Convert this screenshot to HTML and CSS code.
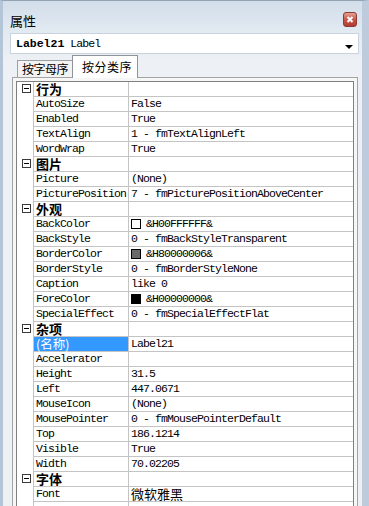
FILE: index.html
```html
<!DOCTYPE html>
<html>
<head>
    <meta charset="UTF-8">
    <title>属性</title>
    <link rel="stylesheet" href="styles.css">
</head>
<body>
    <div class="window">
        <div class="titlebar">
            <span class="title">属性</span>
            <span class="close">
                <svg width="12" height="13" viewBox="0 0 12 13"><path d="M3.5 4 L8.5 9 M8.5 4 L3.5 9" stroke="#fff" stroke-width="2"/></svg>
            </span>
        </div>

        <div class="combo">
            <span class="obj"><b>Label21</b> Label</span>
            <span class="arrow"></span>
        </div>

        <div class="tabs">
            <div class="tab">按字母序</div>
            <div class="tab active">按分类序</div>
        </div>

        <div class="grid-frame">
            <div class="grid" id="grid"></div>
        </div>
    </div>

    <script>
        // 属性数据：cat 为分类行
        const rows = [
            { cat: '行为' },
            ['AutoSize', 'False'],
            ['Enabled', 'True'],
            ['TextAlign', '1 - fmTextAlignLeft'],
            ['WordWrap', 'True'],
            { cat: '图片' },
            ['Picture', '(None)'],
            ['PicturePosition', '7 - fmPicturePositionAboveCenter'],
            { cat: '外观' },
            ['BackColor', '&H00FFFFFF&', '#ffffff'],
            ['BackStyle', '0 - fmBackStyleTransparent'],
            ['BorderColor', '&H80000006&', '#696969'],
            ['BorderStyle', '0 - fmBorderStyleNone'],
            ['Caption', 'like 0'],
            ['ForeColor', '&H00000000&', '#000000'],
            ['SpecialEffect', '0 - fmSpecialEffectFlat'],
            { cat: '杂项' },
            ['(名称)', 'Label21', null, 'sel'],
            ['Accelerator', ''],
            ['Height', '31.5'],
            ['Left', '447.0671'],
            ['MouseIcon', '(None)'],
            ['MousePointer', '0 - fmMousePointerDefault'],
            ['Top', '186.1214'],
            ['Visible', 'True'],
            ['Width', '70.02205'],
            { cat: '字体' },
            ['Font', '微软雅黑', null, 'cjk'],
            ['', '']
        ];

        const grid = document.getElementById('grid');
        const minus = '<svg width="9" height="9" viewBox="0 0 9 9"><rect x="0.5" y="0.5" width="8" height="8" fill="#fff" stroke="#3a3a3a"/><path d="M2 4.5h5" stroke="#000"/></svg>';

        rows.forEach(function(r) {
            const row = document.createElement('div');
            row.className = 'row';
            if (r.cat) {
                row.classList.add('cat');
                row.innerHTML = '<div class="g">' + minus + '</div><div class="n">' + r.cat + '</div><div class="v"></div>';
            } else {
                const swatch = r[2] ? '<span class="swatch" style="background:' + r[2] + '"></span>' : '';
                const nameCls = r[3] === 'sel' ? 'n sel' : 'n';
                const valCls = r[3] === 'cjk' ? 'v cjk' : 'v';
                row.innerHTML = '<div class="g"></div><div class="' + nameCls + '">' + r[0] + '</div><div class="' + valCls + '">' + swatch + r[1] + '</div>';
            }
            grid.appendChild(row);
        });
    </script>
</body>
</html>
```

FILE: styles.css
```css
* {
    box-sizing: border-box;
    margin: 0;
    padding: 0;
}
body {
    width: 369px;
    height: 506px;
    overflow: hidden;
    background: #bccbdc;
    font-family: "Noto Sans CJK SC", sans-serif;
    color: #000;
}
.window {
    height: 506px;
    overflow: hidden;
    border-top: 1px solid #93a3b6;
    border-left: 3px solid #b5c5d8;
    border-right: 7px solid #bdcbdc;
    background: linear-gradient(#d2deea, #e3eaf2 32px, #edf0f4 60px, #eef1f4);
}
.titlebar {
    height: 32px;
    display: flex;
    align-items: flex-start;
    justify-content: space-between;
    padding: 11px 5px 0 7px;
}
.title {
    font-size: 13px;
    line-height: 18px;
}
.close {
    width: 14px;
    height: 15px;
    display: flex;
    align-items: center;
    justify-content: center;
    border: 1px solid #8e3a33;
    border-radius: 3px;
    background: linear-gradient(#e6a196, #c9564a 50%, #b23b30);
}
.combo {
    height: 21px;
    margin: 0 3px 0 7px;
    border: 1px solid #c9d3de;
    background: #fff;
    display: flex;
    align-items: center;
    justify-content: space-between;
    padding: 0 5px;
    font-family: "Liberation Mono", "Noto Sans CJK SC", monospace;
    font-size: 11.5px;
    letter-spacing: -0.9px;
}
.combo b {
    letter-spacing: 0;
}
.arrow {
    width: 0;
    height: 0;
    margin-top: 7px;
    border-left: 4px solid transparent;
    border-right: 4px solid transparent;
    border-top: 4px solid #000;
}
.tabs {
    height: 22px;
    margin: 1px 0 0 14px;
    display: flex;
    align-items: flex-end;
    position: relative;
    z-index: 1;
}
.tab {
    width: 55px;
    height: 17px;
    border: 1px solid #9a9fa8;
    border-right: none;
    border-bottom: none;
    background: #f3f3f3;
    font-size: 12px;
    line-height: 16px;
    letter-spacing: -0.5px;
    text-align: center;
}
.tab.active {
    width: 66px;
    height: 23px;
    margin-bottom: -1px;
    border: 1px solid #8d929b;
    border-bottom: none;
    background: #fff;
    line-height: 22px;
    letter-spacing: 0.5px;
    padding-left: 4px;
}
.grid-frame {
    margin: 0 4px 0 9px;
    border: 1px solid #a3a3a3;
    padding: 3px 3px 0 3px;
    background: #f6f6f6;
}
.grid {
    border: 1px solid #7f7f7f;
    background: #fff;
}
.row {
    display: grid;
    grid-template-columns: 16px 96px 1fr;
    height: 15px;
    font-family: "Liberation Mono", "Noto Sans CJK SC", monospace;
    font-size: 11.5px;
    letter-spacing: -0.9px;
    line-height: 14px;
    white-space: nowrap;
}
.g {
    padding: 2px 0 0 5px;
}
.g svg {
    display: block;
}
.n {
    border-left: 1px solid #c4c4c4;
    border-right: 1px solid #c4c4c4;
    border-bottom: 1px solid #c4c4c4;
    padding-left: 2px;
}
.v {
    border-bottom: 1px solid #c4c4c4;
    padding-left: 2px;
    display: flex;
    align-items: center;
}
.cat .n {
    font-family: "Noto Sans CJK SC", sans-serif;
    font-weight: bold;
    font-size: 13px;
    line-height: 14px;
    letter-spacing: 0;
}
.n.sel {
    background: #3399ff;
    color: #fff;
    font-family: "Noto Sans CJK SC", sans-serif;
    font-size: 12.5px;
    line-height: 14px;
    letter-spacing: 0;
}
.v.cjk {
    font-family: "Noto Sans CJK SC", sans-serif;
    font-size: 13px;
    line-height: 14px;
    letter-spacing: 0;
}
.swatch {
    display: inline-block;
    width: 10px;
    height: 10px;
    border: 1px solid #000;
    margin-right: 5px;
    flex: none;
}
```
